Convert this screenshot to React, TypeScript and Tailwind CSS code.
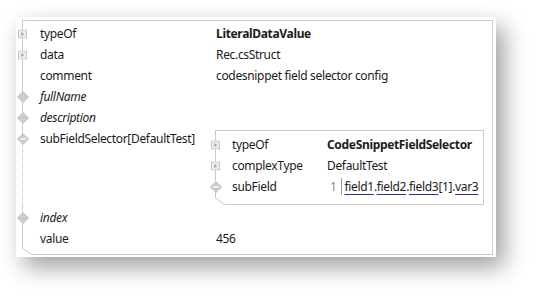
import React from 'react'

const font = { fontFamily: '"Noto Sans", "Open Sans", sans-serif' }

function Expander() {
  return (
    <svg width="9" height="9" viewBox="0 0 9 9" className="absolute left-[-5px] top-1/2 -translate-y-1/2">
      <rect x="0.5" y="0.5" width="8" height="8" fill="#ececec" stroke="#c6c6c6" />
      <path d="M3.5 2.5 L6 4.5 L3.5 6.5 Z" fill="#9a9a9a" />
    </svg>
  )
}

function Diamond({ minus }: { minus?: boolean }) {
  return (
    <svg width="12" height="12" viewBox="0 0 12 12" className="absolute left-[-6.5px] top-1/2 -translate-y-1/2">
      <path d="M6 0.5 L11.5 6 L6 11.5 L0.5 6 Z" fill="#cdcdcd" stroke="#c2c2c2" />
      {minus && <path d="M3 6 H9" stroke="#fff" strokeWidth="1.3" />}
    </svg>
  )
}

function Corner() {
  return (
    <svg width="10" height="7" viewBox="0 0 10 7" className="absolute left-[-1px] bottom-[-1px]">
      <rect x="0" y="0" width="10" height="7" fill="#fff" />
      <path d="M0.5 0 L9.5 6.5 L10 6.5" stroke="#cbcbcb" fill="none" />
    </svg>
  )
}

function Row({ icon, label, value, italic, bold }: {
  icon?: React.ReactNode
  label: string
  value?: React.ReactNode
  italic?: boolean
  bold?: boolean
}) {
  return (
    <div className="flex h-[21px] items-center">
      <div className="relative h-full w-[17px]">{icon}</div>
      <div className={`w-[176px] ${italic ? 'italic' : ''}`}>{label}</div>
      <div className={bold ? 'font-bold' : ''}>{value}</div>
    </div>
  )
}

function InnerRow({ icon, label, value, bold }: {
  icon?: React.ReactNode
  label: string
  value: React.ReactNode
  bold?: boolean
}) {
  return (
    <div className="flex h-[21px] items-center">
      <div className="relative h-full w-[16px]">{icon}</div>
      <div className="w-[95px]">{label}</div>
      <div className={bold ? 'font-bold' : ''}>{value}</div>
    </div>
  )
}

function Code() {
  const u = 'underline decoration-[#23349e] underline-offset-[3px]'
  return (
    <div className="flex items-center">
      <span className="pl-[3px] pr-[4px] text-[#8a8a8a]">1</span>
      <span className="h-[17px] w-px bg-[#9a9a9a]" />
      <span className="pl-[3px]">
        <span className={u}>field1</span>.<span className={u}>field2</span>.<span className={u}>field3</span>[1].<span className={u}>var3</span>
      </span>
    </div>
  )
}

export default function App() {
  return (
    <div className="min-h-[307px] bg-white pl-[16px] pt-[17px] text-[12px] tracking-[-0.33px] text-[#1b1b1b]" style={font}>
      <div className="h-[240px] w-[480px] bg-white pb-[2px] pl-[6px] pr-[3px] pt-[3px] shadow-[8px_10px_22px_rgba(0,0,0,0.38)]">
        <div className="relative h-full border border-[#cbcbcb] pt-[2px]">
          <Row icon={<Expander />} label="typeOf" value="LiteralDataValue" bold />
          <Row icon={<Expander />} label="data" value="Rec.csStruct" />
          <Row label="comment" value="codesnippet field selector config" />
          <Row icon={<Diamond />} label="fullName" italic />
          <Row icon={<Diamond />} label="description" italic />

          {/* subFieldSelector with nested editor */}
          <div className="flex">
            <div className="relative w-[17px]">
              <div className="absolute left-[-1px] top-[15px] bottom-0 border-l border-dotted border-[#bdbdbd] bg-white" />
              <div className="relative h-[21px]">
                <Diamond minus />
              </div>
            </div>
            <div className="flex h-[21px] w-[175px] items-center">subFieldSelector[DefaultTest]</div>
            <div className="relative mt-[2px] mb-[1px] w-[269px] border border-[#cbcbcb] pb-[7px] pt-[3px]">
              <InnerRow icon={<Expander />} label="typeOf" value="CodeSnippetFieldSelector" bold />
              <InnerRow icon={<Expander />} label="complexType" value="DefaultTest" />
              <InnerRow icon={<Diamond minus />} label="subField" value={<Code />} />
              <Corner />
            </div>
          </div>

          <div className="relative mt-px">
            <div className="absolute left-[-1px] top-0 h-[8px] border-l border-dotted border-[#bdbdbd] bg-white" />
            <Row icon={<Diamond />} label="index" italic />
          </div>
          <Row label="value" value="456" />
          <Corner />
        </div>
      </div>
    </div>
  )
}
